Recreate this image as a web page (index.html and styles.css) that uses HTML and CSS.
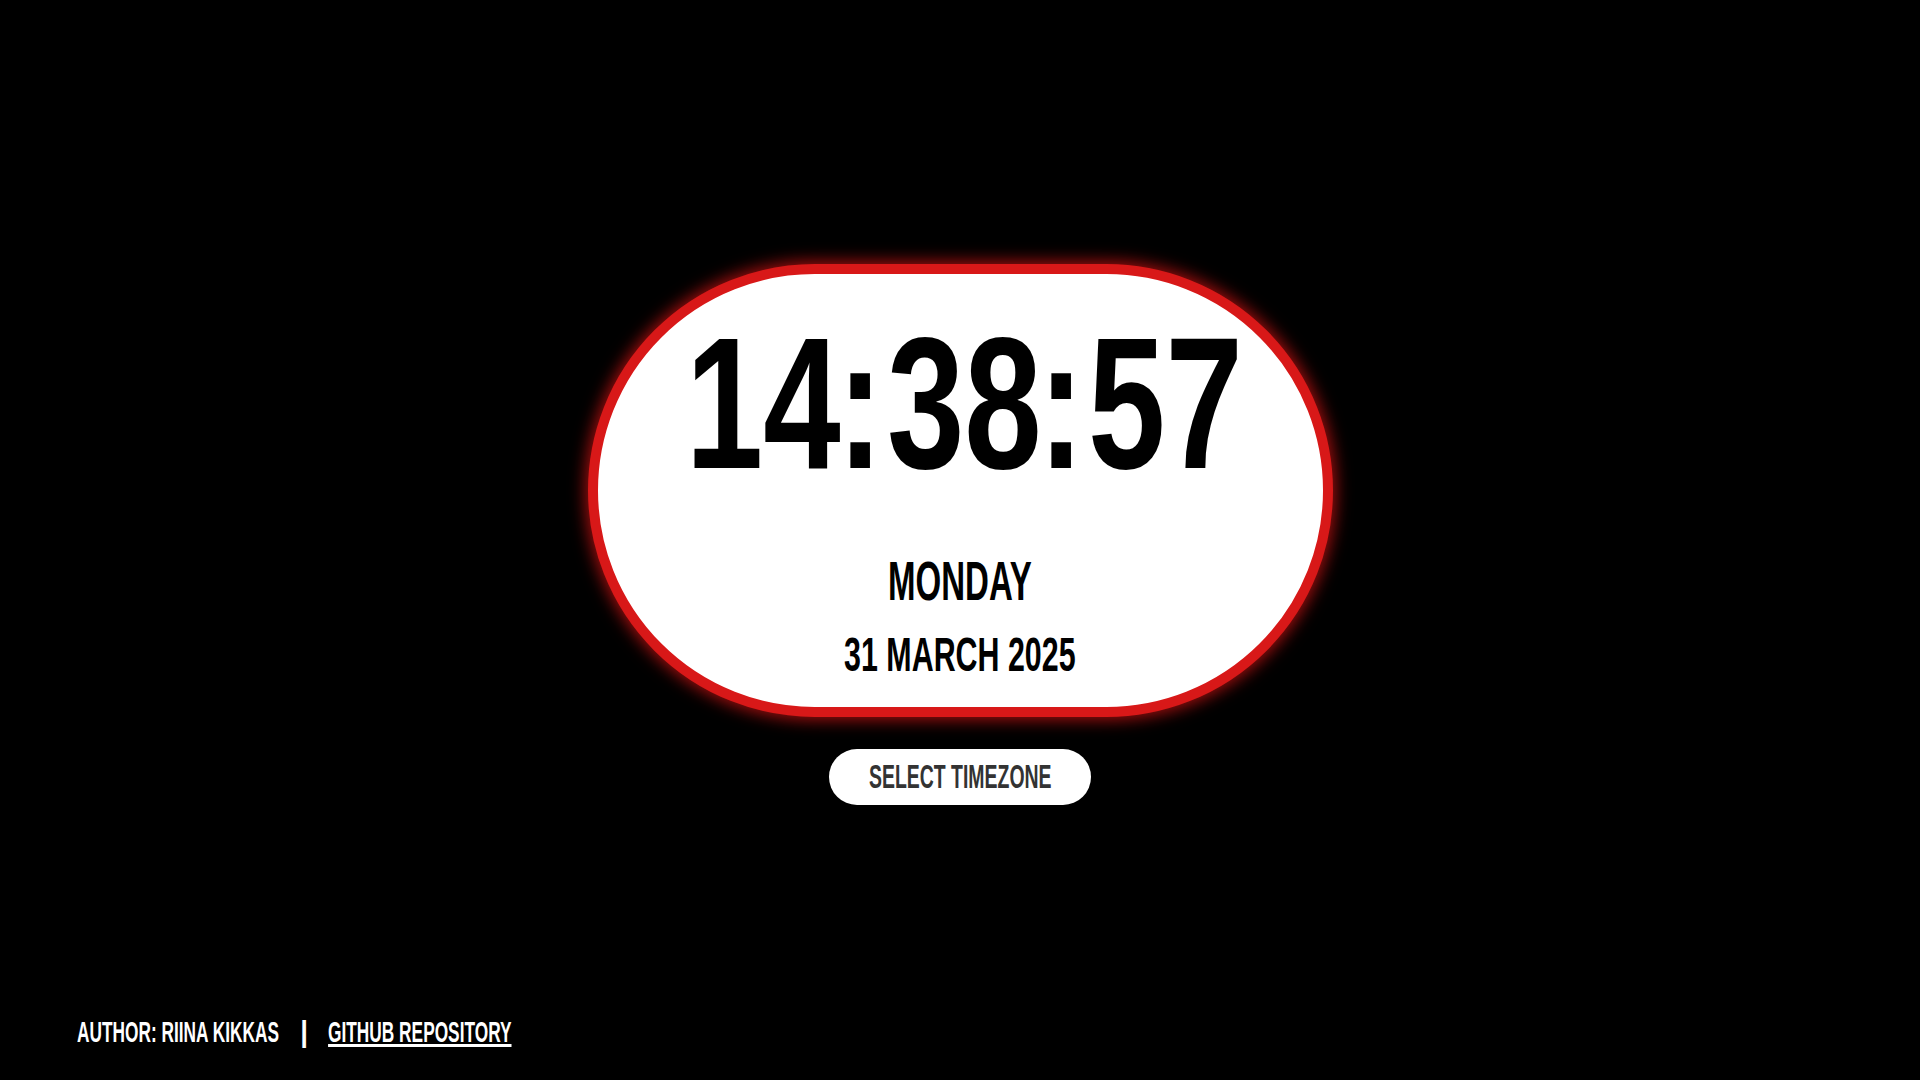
FILE: index.html
```html
<!DOCTYPE html>
<html lang="en">
<head>
<meta charset="utf-8">
<title>Clock</title>
<link rel="stylesheet" href="styles.css">
</head>
<body>
<main class="main">
  <section class="clock">
    <div class="time"><span class="time-text">14<span class="colon">:</span>38<span class="colon">:</span>57</span></div>
    <div class="day"><span class="day-text">MONDAY</span></div>
    <div class="date"><span class="date-text">31 MARCH 2025</span></div>
  </section>
  <button class="tz-button" type="button"><span class="tz-text">SELECT TIMEZONE</span></button>
</main>
<footer class="footer">
  <div class="footer-inner">
    <span class="author">AUTHOR: RIINA KIKKAS</span>
    <span class="bar">|</span>
    <a class="repo" href="#">GITHUB REPOSITORY</a>
  </div>
</footer>
</body>
</html>
```

FILE: styles.css
```css
html, body {
  margin: 0;
  padding: 0;
}

body {
  background: #000;
  height: 100vh;
  display: flex;
  flex-direction: column;
  font-family: "Liberation Sans", Arial, sans-serif;
  font-weight: bold;
  overflow: hidden;
}

.main {
  flex: 1;
  display: flex;
  flex-direction: column;
  align-items: center;
  padding-top: 264px;
}

.clock {
  box-sizing: border-box;
  width: 745px;
  height: 453px;
  border: 10px solid #d81818;
  border-radius: 300px;
  background: #fff;
  box-shadow: 0 0 16px 3px rgba(215, 20, 20, 0.75);
  display: flex;
  flex-direction: column;
  align-items: center;
  padding-top: 35px;
  color: #000;
}

.time {
  font-size: 188px;
  line-height: 188px;
  height: 188px;
}

.time-text {
  display: inline-block;
  transform: scaleX(0.74);
  margin-left: 9px;
}

.colon {
  margin-left: -5px;
  margin-right: 5px;
}

.day {
  margin-top: 56px;
  font-size: 56px;
  line-height: 56px;
  height: 56px;
}

.day-text {
  display: inline-block;
  transform: scaleX(0.59);
}

.date {
  margin-top: 22px;
  font-size: 47.5px;
  line-height: 47.5px;
  height: 47.5px;
}

.date-text {
  display: inline-block;
  transform: scaleX(0.64);
}

.tz-button {
  margin-top: 32px;
  width: 262px;
  height: 56px;
  border: none;
  border-radius: 28px;
  background: #fff;
  color: #333;
  font-family: inherit;
  font-weight: bold;
  font-size: 33.5px;
  line-height: 33.5px;
  padding: 0;
  display: flex;
  align-items: center;
  justify-content: center;
  white-space: nowrap;
  overflow: visible;
}

.tz-text {
  display: inline-block;
  transform: scaleX(0.58);
}

.footer {
  padding: 0 0 34px 77px;
  color: #fff;
}

.footer-inner {
  display: flex;
  align-items: center;
  font-size: 29.3px;
  line-height: 29.3px;
  white-space: nowrap;
  transform: scaleX(0.59);
  transform-origin: left center;
}

.bar {
  display: inline-block;
  margin: 0 36px 0 39px;
  transform: scaleX(1.6);
}

.repo {
  color: #fff;
  text-decoration: underline;
  text-decoration-thickness: 3px;
  text-underline-offset: 2px;
}
```
